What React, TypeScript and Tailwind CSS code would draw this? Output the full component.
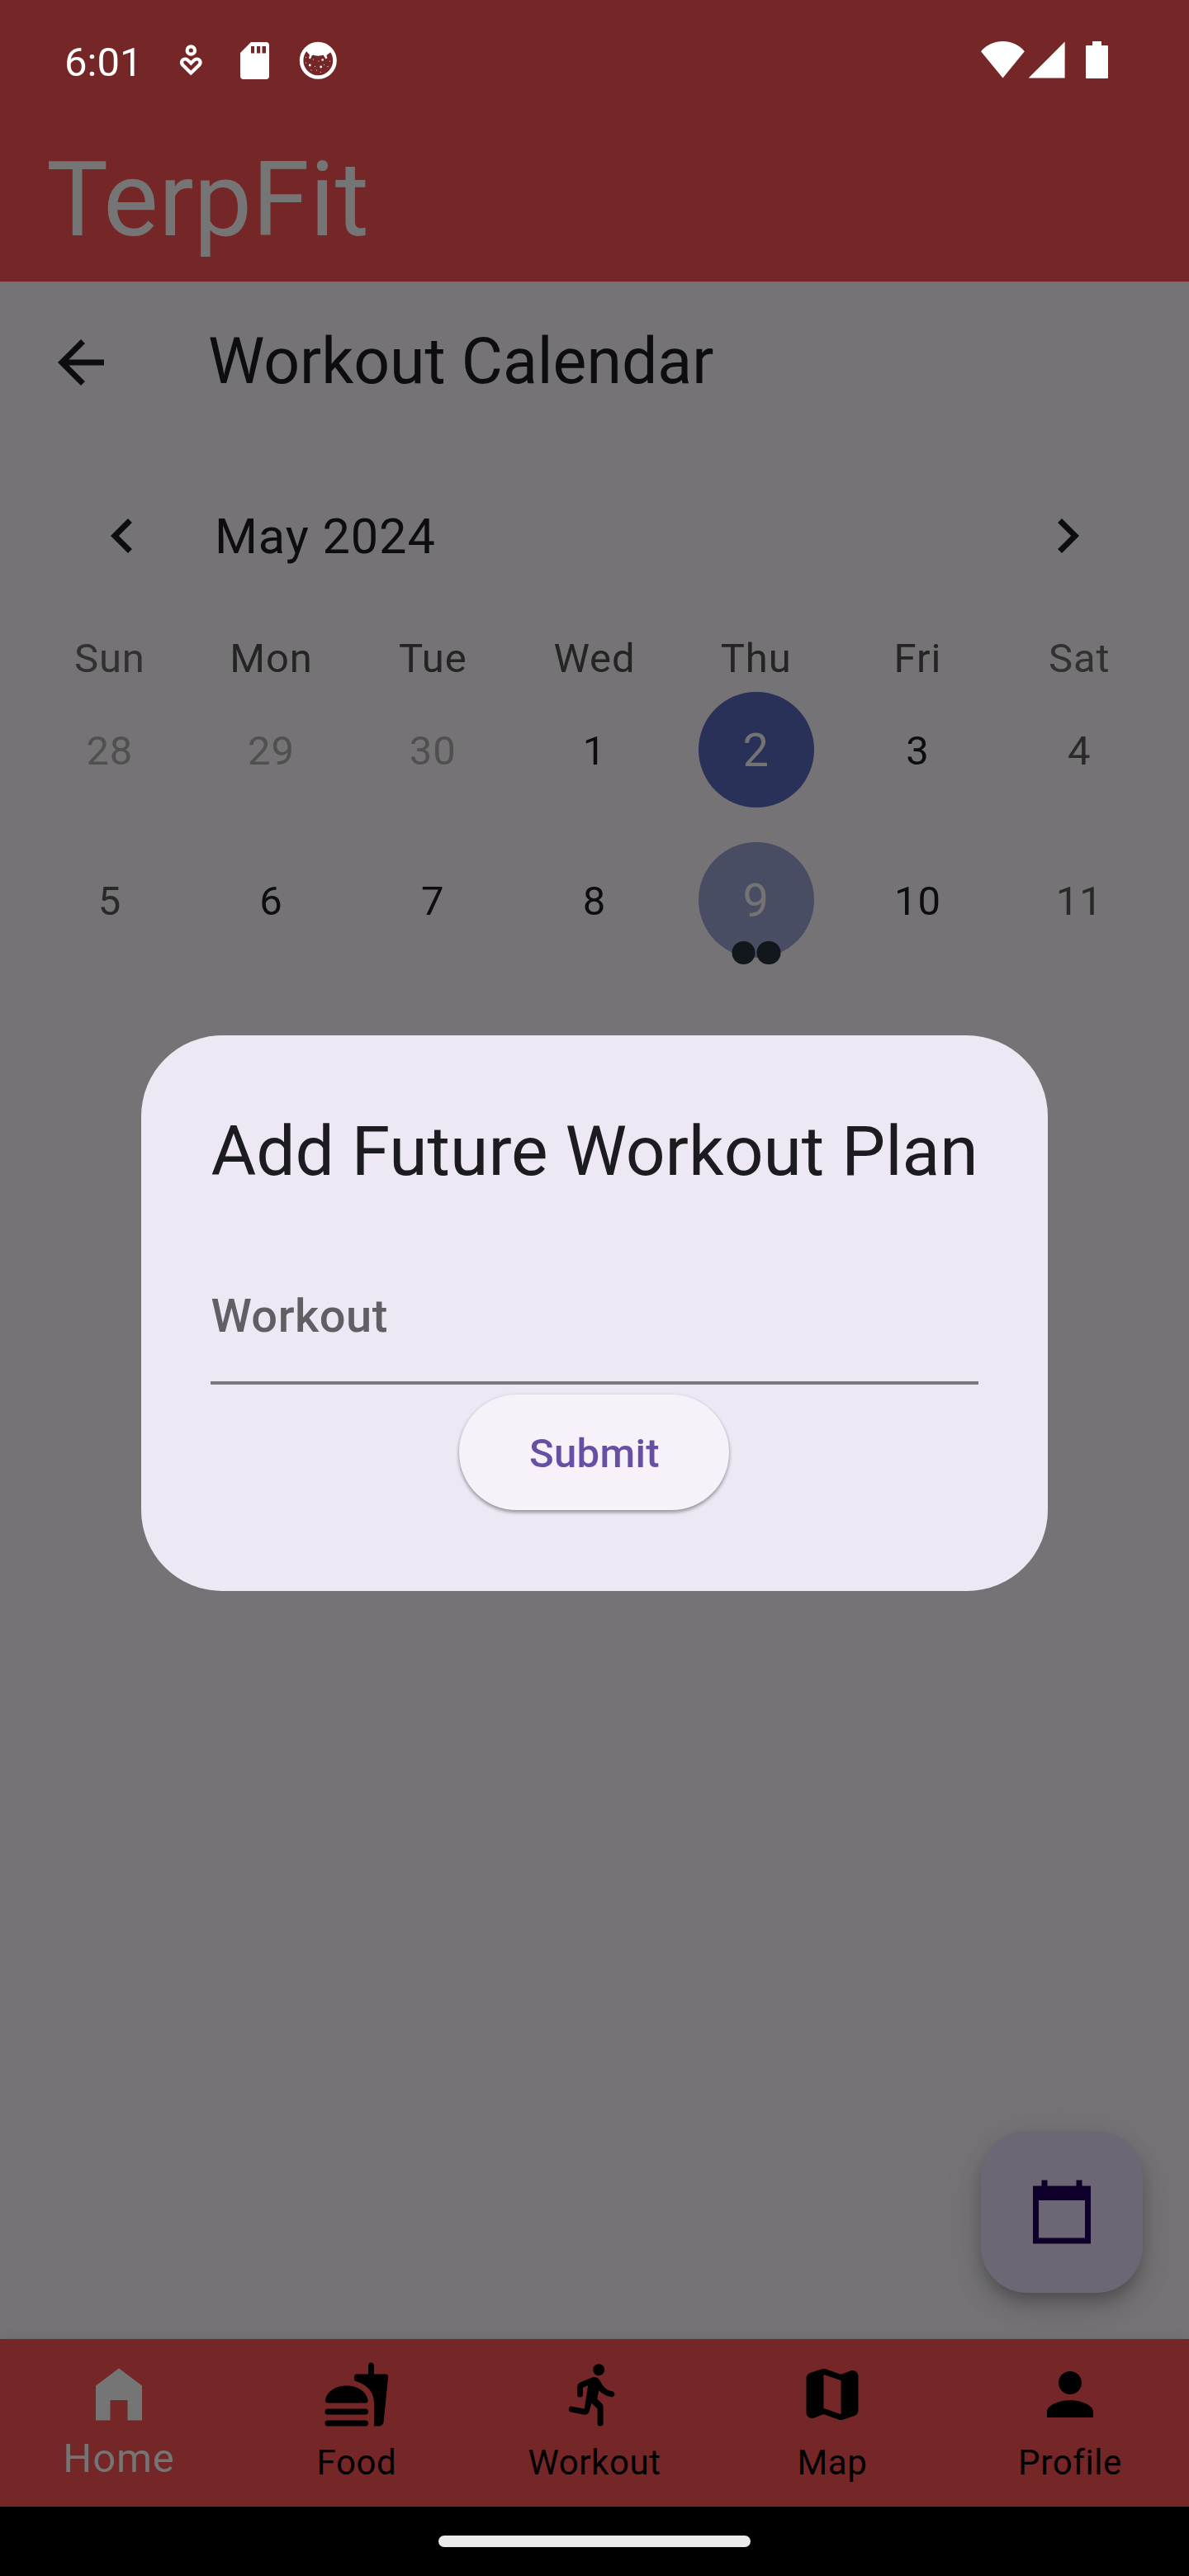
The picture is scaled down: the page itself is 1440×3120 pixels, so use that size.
import React from 'react';

type IconProps = { className?: string; children: React.ReactNode };

/** 24-unit glyph that takes its colour from the text colour. */
function Icon({ className = '', children }: IconProps) {
  return (
    <svg viewBox="0 0 24 24" fill="currentColor" className={`h-[84px] w-[84px] shrink-0 ${className}`}>
      {children}
    </svg>
  );
}

function StatusBar() {
  return (
    <div className="flex h-[147px] items-start justify-between pl-[78px] pr-[98px] text-white">
      <div className="flex items-start">
        <span className="mt-[46px] w-[90px] whitespace-nowrap text-[49px] leading-[60px]">6:01</span>
        <svg viewBox="0 0 30 40" className="ml-[48px] mt-[53px] h-[40px] w-[30px]" fill="none" stroke="white" strokeWidth="4.2">
          <circle cx="15.3" cy="8" r="4.7" />
          <path d="M15.3 35.400L5.600 26C2.400 22.800 4.400 18.500 8.500 18.500C10.800 18.500 12 20.200 15.300 23.600C18.600 20.200 19.800 18.500 22.100 18.500C26.200 18.500 28.200 22.800 25 26Z" />
        </svg>
        <svg viewBox="0 0 35 45" className="ml-[45px] mt-[51px] h-[45px] w-[35px]">
          <path
            fill="white"
            fillRule="evenodd"
            d="M13 0H31a4 4 0 0 1 4 4V41a4 4 0 0 1-4 4H4a4 4 0 0 1-4-4V13ZM13 5V13.500H17V5ZM20 5V13.500H24.200V5ZM26.500 5V13.500H31V5Z"
          />
        </svg>
        <svg viewBox="0 0 46 46" className="ml-[36px] mt-[50px] h-[46px] w-[46px]" fill="white">
          <circle cx="23.300" cy="23.300" r="20.200" fill="none" stroke="white" strokeWidth="4.600" />
          <path d="M8 8C16 0 30 0 38.500 8L38 13.500L34 16.500C33 16.500 34 19 34.500 20L32.500 21.500L29.500 16.500C26 18 20 18 17.500 16.500L15.500 17.500L14 21.500L12 20.500L13 16.500L9.500 12.500Z" />
          <circle cx="13.300" cy="29" r="1.400" />
          <circle cx="26.700" cy="31" r="1.400" />
          <circle cx="28.700" cy="22.500" r="1.300" />
          <circle cx="8.500" cy="19.500" r=".6" />
          <circle cx="8.500" cy="26" r=".6" />
          <circle cx="17.500" cy="22" r=".6" />
          <circle cx="24" cy="24" r=".6" />
          <circle cx="19.500" cy="30.500" r=".6" />
          <circle cx="30.500" cy="28.500" r=".6" />
          <circle cx="37.500" cy="24" r=".6" />
          <circle cx="35" cy="30.500" r=".6" />
          <circle cx="15" cy="35" r=".6" />
          <circle cx="21.500" cy="35" r=".6" />
          <circle cx="26.300" cy="37.300" r=".6" />
        </svg>
      </div>
      <div className="flex items-start">
        <svg viewBox="0 0 53 45" className="mt-[50px] h-[45px] w-[53px]" fill="white">
          <path d="M0 12.200C14-4 39-4 52.800 12.200L26.500 44.500Z" />
        </svg>
        <svg viewBox="0 0 45 45" className="ml-[4px] mt-[50px] h-[45px] w-[45px]" fill="white">
          <path d="M.6 44.600L44.600.6V44.600Z" />
        </svg>
        <svg viewBox="0 0 27 45" className="ml-[25px] mt-[50px] h-[45px] w-[27px]" fill="white">
          <path d="M8 0H19V5H26a1 1 0 0 1 1 1V44a1 1 0 0 1-1 1H1a1 1 0 0 1-1-1V6a1 1 0 0 1 1-1H8Z" />
        </svg>
      </div>
    </div>
  );
}

const weekdays = ['Sun', 'Mon', 'Tue', 'Wed', 'Thu', 'Fri', 'Sat'];
const weeks = [
  [28, 29, 30, 1, 2, 3, 4],
  [5, 6, 7, 8, 9, 10, 11],
];

function DayCell({ day, column }: { day: number; column: number }) {
  if (day === 2) {
    return (
      <div className="flex h-[182px] items-center justify-center">
        <div className="flex h-[140px] w-[140px] items-center justify-center rounded-full bg-[#2a3158] pt-[2px] text-[56px] leading-[66px] tracking-[0.9px] text-[#737373]">
          {day}
        </div>
      </div>
    );
  }
  if (day === 9) {
    return (
      <div className="relative flex h-[182px] items-center justify-center">
        <div className="flex h-[140px] w-[140px] items-center justify-center rounded-full bg-[#494d64] pt-[2px] text-[56px] leading-[66px] tracking-[0.9px] text-[#737373]">
          {day}
        </div>
        <div className="absolute bottom-[13px] left-1/2 flex -translate-x-1/2 gap-[2px]">
          <span className="h-[28.5px] w-[28.5px] rounded-full bg-[#11171a]" />
          <span className="h-[28.5px] w-[28.5px] rounded-full bg-[#11171a]" />
        </div>
      </div>
    );
  }
  const color =
    day >= 28 ? 'text-[#505050]' : column === 0 || column === 6 ? 'text-[#292929]' : 'text-[#0d0c0e]';
  return (
    <div className={`flex h-[182px] items-center justify-center pt-[4px] text-[49px] leading-[58px] tracking-[0.9px] ${color}`}>
      {day}
    </div>
  );
}

function Calendar() {
  return (
    <section className="px-[35px]">
      <div className="flex h-[84px] items-center pl-[71px] pr-[70px] text-[#0d0c0e]">
        <Icon>
          <path d="M15.410 7.410L14 6l-6 6 6 6 1.410-1.410L10.830 12z" />
        </Icon>
        <h2 className="ml-[70px] flex-1 whitespace-nowrap pt-[2px] text-[59.5px] leading-[70px] tracking-[0.9px]">May 2024</h2>
        <Icon>
          <path d="M10 6L8.590 7.410 13.170 12l-4.580 4.590L10 18l6-6z" />
        </Icon>
      </div>
      <div className="mt-[77px] grid grid-cols-7">
        {weekdays.map((name, i) => (
          <div
            key={name}
            className={`h-[49px] pt-px text-center text-[49px] leading-[58px] tracking-[0.9px] ${
              i === 0 || i === 6 ? 'text-[#313131]' : 'text-[#242424]'
            }`}
          >
            {name}
          </div>
        ))}
        {weeks.flat().map((day, i) => (
          <DayCell key={day} day={day} column={i % 7} />
        ))}
      </div>
    </section>
  );
}

function Dialog() {
  return (
    <div className="absolute left-[171.400px] top-[1253.800px] flex h-[672.800px] w-[1097.200px] flex-col rounded-[98px] bg-[#eee8f4] px-[84px] pt-[84px]">
      <h3 className="mt-[1px] whitespace-nowrap text-[84px] leading-[112px] text-[#1c1b1f]">Add Future Workout Plan</h3>
      <div className="mt-[56px] flex h-[170px] items-center border-b-4 border-[#7b7680] pt-[9px]">
        <span className="text-[56px] font-medium leading-[84px] tracking-[0.525px] text-[#615f64]">Workout</span>
      </div>
      <button className="mt-[12px] h-[140px] w-[327px] self-center rounded-full bg-[#f7f2fa] pt-[4px] text-[49px] font-medium leading-[70px] tracking-[0.350px] text-[#6750a4] shadow-[0_3px_4px_rgba(0,0,0,0.3),0_1px_5px_rgba(0,0,0,0.12)]">
        Submit
      </button>
    </div>
  );
}

const navItems = [
  { label: 'Home', icon: <path d="M4 9l8-6 8 6v12h-5v-7H9v7H4z" /> },
  {
    label: 'Food',
    icon: (
      <>
        <path d="M18 23h1.700c.8 0 1.500-.650 1.600-1.450L22.900 5.950c.05-.5-.3-.95-.8-.95H18V2c0-.55-.45-1-1-1s-1 .45-1 1v3h-4c-.5 0-.9.400-.85.95l.05 1.350c2.200.600 3.800 1.600 4.900 2.700C17.400 11.400 18 13 18 15.100z" />
        <path d="M2 15c-.6 0-1-.450-.9-1C1.700 10.700 5 9 8.500 9s6.800 1.700 7.400 5c.1.550-.3 1-.9 1z" />
        <rect x="1" y="17" width="15" height="2" rx="1" />
        <rect x="1" y="21" width="15" height="2" rx="1" />
      </>
    ),
  },
  {
    label: 'Workout',
    icon: (
      <>
        <circle cx="13.480" cy="3.480" r="2" />
        <path d="M9.750 8.950L8 9.650V12a1 1 0 0 1-2 0V9.600c0-.8.450-1.500 1.200-1.830L11.200 6.170c1-.370 1.900 0 2.500.850l1 1.600c.7 1.150 1.900 2.050 3.400 2.300.5.1.850.500.850 1 0 .6-.550 1.100-1.150 1-1.750-.3-3.300-1.120-4.300-2.320L12.950 13.600l1.450 1.400c.4.400.630.900.630 1.450V22a1 1 0 0 1-2 0v-5l-2.100-2-.7 2.850c-.25.850-1.100 1.350-2 1.170L3.900 18.150a1 1 0 0 1 .4-1.960l4.200.810z" />
      </>
    ),
  },
  {
    label: 'Map',
    icon: (
      <path d="M14.650 4.980l-5-1.750c-.42-.15-.88-.15-1.300-.01L4.360 4.560C3.550 4.840 3 5.600 3 6.460v11.850c0 1.410 1.410 2.370 2.720 1.860l2.930-1.140c.22-.09.470-.09.690-.01l5 1.750c.42.15.88.15 1.300.01l3.990-1.340c.81-.27 1.360-1.040 1.360-1.900V5.690c0-1.410-1.410-2.370-2.720-1.860l-2.930 1.140c-.22.08-.46.09-.69.01zM15 18.890l-6-2.110V5.110l6 2.110v11.670z" />
    ),
  },
  {
    label: 'Profile',
    icon: (
      <path d="M12 12c2.210 0 4-1.790 4-4s-1.790-4-4-4-4 1.790-4 4 1.790 4 4 4zm0 2c-2.670 0-8 1.340-8 4v2h16v-2c0-2.660-5.330-4-8-4z" />
    ),
  },
];

function BottomNav() {
  return (
    <nav className="grid h-[203px] grid-cols-5 bg-[#752626] shadow-[0_-2px_14px_rgba(0,0,0,0.07)]">
      {navItems.map((item, i) => (
        <div
          key={item.label}
          className={`flex flex-col items-center pt-[25px] ${i === 0 ? 'text-[#757575]' : 'text-black'}`}
        >
          <Icon>{item.icon}</Icon>
          <span
            className={
              i === 0
                ? 'mt-[7px] text-[49px] leading-[58px] tracking-[0.875px]'
                : 'mt-[16px] text-[42px] leading-[50px] tracking-[0.6px]'
            }
          >
            {item.label}
          </span>
        </div>
      ))}
    </nav>
  );
}

export default function App() {
  return (
    <div className="relative flex h-[3120px] w-[1440px] flex-col overflow-hidden bg-[#757375] font-['Roboto',sans-serif]">
      <header className="h-[341px] bg-[#752626]">
        <StatusBar />
        <h1 className="mt-[20px] pl-[56px] text-[126px] leading-[150px] text-[#757575]">TerpFit</h1>
      </header>
      <main className="flex-1">
        <div className="flex h-[196px] items-center pl-[56px] text-[#0d0c0e]">
          <Icon>
            <path d="M20 11H7.830l5.590-5.590L12 4l-8 8 8 8 1.410-1.410L7.830 13H20v-2z" />
          </Icon>
          <h2 className="ml-[112px] whitespace-nowrap pb-[2px] text-[77px] leading-[98px]">Workout Calendar</h2>
        </div>
        <div className="mt-[70px]">
          <Calendar />
        </div>
      </main>
      <BottomNav />
      <div className="flex h-[84px] items-start justify-center bg-black pt-[35px]">
        <div className="h-[14px] w-[378px] rounded-[7px] bg-[#ececec]" />
      </div>
      <button className="absolute left-[1188px] top-[2581px] flex h-[196px] w-[196px] items-center justify-center rounded-[56px] bg-[#6c6675] text-[#0f002b] shadow-[0_11px_17px_-3px_rgba(0,0,0,0.22),0_20px_34px_rgba(0,0,0,0.11),0_3px_60px_rgba(0,0,0,0.06)]">
        <Icon>
          <path d="M22 3h-3V1h-2v2H7V1H5v2H2v20h20V3zm-2 18H4V8h16v13z" />
        </Icon>
      </button>
      <Dialog />
    </div>
  );
}
